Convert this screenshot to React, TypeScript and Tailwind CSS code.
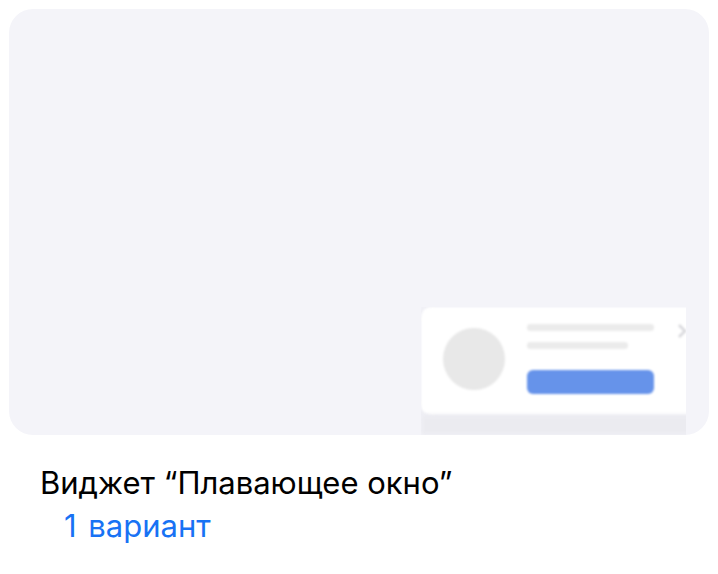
export default function App() {
  return (
    <div className="w-[718px] h-[574px] bg-white p-[9px] font-['Inter','Liberation_Sans',Arial,sans-serif]">
      <div className="h-[426px] w-[700px] rounded-[24px] bg-[#f4f4f9] overflow-hidden flex flex-col items-end justify-end pr-[23px]">
        <div className="w-[265px] h-[128px] overflow-hidden flex flex-col">
          <div className="w-[300px] h-[108px] shrink-0 bg-white rounded-[10px] shadow-[0_0_10px_rgba(200,200,215,0.35)] flex px-[22px] pt-[17px] blur-[0.8px]">
            <div className="w-[62px] h-[62px] mt-[4px] rounded-full bg-[#e8e8e8] shrink-0" />
            <div className="flex flex-col ml-[22px] w-[127px] shrink-0">
              <div className="h-[7px] w-[127px] rounded-full bg-[#ebebeb]" />
              <div className="h-[7px] w-[101px] mt-[11px] rounded-full bg-[#ebebeb]" />
              <div className="h-[24px] w-[127px] mt-[21px] rounded-[6px] bg-[#6693ea]" />
            </div>
            <svg className="ml-[22px] mt-[-1px] shrink-0" width="12" height="16" viewBox="0 0 12 16" fill="none">
              <path d="M3 2 L9 8 L3 14" stroke="#d8d8dc" strokeWidth="2.5" />
            </svg>
          </div>
          <div className="h-[20px] w-[300px] bg-[#ebebf0] blur-[2px]" />
        </div>
      </div>
      <div className="pl-[31px] mt-[30px] text-[31px] leading-[36px] text-black">
        Виджет “Плавающее окно”
      </div>
      <div className="pl-[55px] mt-[7px] text-[31px] leading-[36px] text-[#1872f4] [word-spacing:3px]">
        1 вариант
      </div>
    </div>
  )
}
